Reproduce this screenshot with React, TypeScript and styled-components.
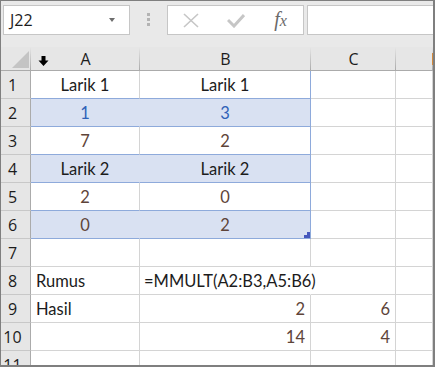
import styled, { createGlobalStyle } from 'styled-components'

// ── palette ────────────────────────────────────────────────
const C = {
  frame: '#7f7f7f',
  chrome: '#e9e9e9',
  head: '#e6e6e6',
  headLine: '#ababab',
  rowLine: '#c8c8c8',
  box: '#c6c6c6',
  grid: '#d4d4d4',
  band: '#d9e1f2',
  tableLine: '#8eaadb',
  handle: '#4658bd',
  text: '#1c1c1c',
  blue: '#2f62b8',
  num: '#5e4439',
  icon: '#c6c6c6',
  orange: '#d2893c',
}

const Global = createGlobalStyle`
  html, body { margin: 0; padding: 0; background: #fff; }
  * { box-sizing: border-box; }
`

const Frame = styled.div`
  width: 435px;
  height: 367px;
  border: 1px solid ${C.frame};
  border-right-width: 2px;
  border-bottom-width: 2px;
  background: #fff;
  overflow: hidden;
  display: flex;
  flex-direction: column;
`

// ── formula bar ───────────────────────────────────────────
const Toolbar = styled.div`
  height: 46px;
  flex-shrink: 0;
  background: ${C.chrome};
  display: flex;
  align-items: flex-start;
  padding: 4px 0 0 2px;
`

const NameBox = styled.div`
  width: 127px;
  height: 30px;
  background: #fff;
  border: 1px solid ${C.box};
  display: flex;
  align-items: center;
  justify-content: space-between;
  padding: 0 14px 0 6px;
  font-family: 'Open Sans', 'Noto Sans', sans-serif;
  font-size: 16px;
  color: ${C.text};
`

const Caret = styled.span`
  width: 0;
  height: 0;
  border-left: 3.5px solid transparent;
  border-right: 3.5px solid transparent;
  border-top: 4px solid #6d6d6d;
`

const Grip = styled.div`
  width: 37px;
  height: 30px;
  display: flex;
  flex-direction: column;
  align-items: center;
  padding-top: 8px;
  gap: 2px;
`

const GripDot = styled.span`
  width: 3px;
  height: 3px;
  background: #b3b3b3;
`

const FxButtons = styled.div`
  width: 137px;
  height: 30px;
  background: #fff;
  border: 1px solid ${C.box};
  display: grid;
  grid-template-columns: repeat(3, 1fr);
  margin-right: 3px;
`

const IconSlot = styled.div`
  display: flex;
  align-items: center;
  justify-content: center;
`

const FxLabel = styled.span`
  font-family: 'Liberation Serif', 'DejaVu Serif', serif;
  font-style: italic;
  font-size: 20px;
  color: #6a6a6a;
  line-height: 1;
  margin-top: -2px;
  & > span {
    font-size: 16px;
  }
`

const FormulaInput = styled.div`
  flex: 1;
  height: 30px;
  background: #fff;
  border: 1px solid ${C.box};
  border-right: none;
`

// ── sheet grid ────────────────────────────────────────────
const Sheet = styled.div`
  flex: 1;
  display: grid;
  grid-template-columns: 30px 109px 171px 85px 1fr;
  grid-template-rows: 24px;
  grid-auto-rows: 28px;
  background: #fff;
`

const HeadCell = styled.div<{ $mark?: boolean }>`
  position: relative;
  background: ${C.head};
  border-bottom: 1px solid ${C.headLine};
  display: flex;
  align-items: center;
  justify-content: center;
  font-family: 'Open Sans', 'Noto Sans', sans-serif;
  font-size: 16px;
  color: ${C.text};
  padding-top: 1px;
  &::after {
    content: '';
    position: absolute;
    right: 0;
    top: 0;
    bottom: 0;
    width: 1px;
    background: linear-gradient(${C.head}, ${C.headLine});
  }
  &::before {
    content: '';
    display: ${(p) => (p.$mark ? 'block' : 'none')};
    position: absolute;
    right: 0;
    top: 6px;
    width: 1px;
    height: 12px;
    background: ${C.orange};
    z-index: 1;
  }
`

const CornerMark = styled.span`
  position: absolute;
  right: 2px;
  bottom: 2px;
  width: 0;
  height: 0;
  border-left: 17px solid transparent;
  border-bottom: 17px solid #c4c4c4;
`

const SortArrow = styled.svg`
  position: absolute;
  left: 7px;
  top: 9px;
`

const RowHead = styled.div`
  background: ${C.head};
  border-right: 1px solid ${C.headLine};
  border-bottom: 1px solid ${C.rowLine};
  display: flex;
  align-items: flex-end;
  justify-content: center;
  padding: 0 6px 3px 0;
  font-family: 'Open Sans', 'Noto Sans', sans-serif;
  font-size: 16px;
  line-height: 20px;
  color: ${C.text};
`

type Align = 'left' | 'center' | 'right'
type Tone = 'text' | 'blue' | 'num'

interface CellProps {
  $align?: Align
  $tone?: Tone
  $band?: boolean
  $table?: boolean
  $edge?: boolean
  $flow?: boolean
}

const toneColor = (t?: Tone) => (t === 'blue' ? C.blue : t === 'num' ? C.num : C.text)

const rightLine = (p: CellProps) => {
  if (p.$edge) return C.tableLine
  if (p.$flow) return '#fff'
  if (p.$band) return C.band
  return C.grid
}

const Cell = styled.div<CellProps>`
  position: relative;
  background: ${(p) => (p.$band ? C.band : 'transparent')};
  border-right: 1px solid ${rightLine};
  border-bottom: 1px solid ${(p) => (p.$table ? C.tableLine : C.grid)};
  display: flex;
  align-items: flex-end;
  justify-content: ${(p) =>
    p.$align === 'center' ? 'center' : p.$align === 'right' ? 'flex-end' : 'flex-start'};
  padding: 0 5px 3px ${(p) => (p.$flow ? 4 : 5)}px;
  font-family: Lato, 'Open Sans', sans-serif;
  font-size: 16.5px;
  line-height: 20px;
  white-space: nowrap;
  overflow: visible;
  color: ${(p) => toneColor(p.$tone)};
`

const FillHandle = styled.span`
  position: absolute;
  right: 0;
  bottom: 0;
  width: 6px;
  height: 6px;
  background: ${C.handle};
  clip-path: polygon(50% 0, 100% 0, 100% 100%, 0 100%, 0 50%, 50% 50%);
`

// ── data ──────────────────────────────────────────────────
interface RowData {
  a?: string
  b?: string
  c?: string
  table?: boolean
  band?: boolean
  tone?: Tone
  bTone?: Tone
  align?: Align
  bAlign?: Align
  handle?: boolean
  flow?: boolean
}

const rows: RowData[] = [
  { a: 'Larik 1', b: 'Larik 1', table: true, align: 'center' },
  { a: '1', b: '3', table: true, band: true, tone: 'blue', align: 'center' },
  { a: '7', b: '2', table: true, tone: 'num', align: 'center' },
  { a: 'Larik 2', b: 'Larik 2', table: true, band: true, align: 'center' },
  { a: '2', b: '0', table: true, tone: 'num', align: 'center' },
  { a: '0', b: '2', table: true, band: true, tone: 'num', align: 'center', handle: true },
  {},
  { a: 'Rumus', b: '=MMULT(A2:B3,A5:B6)', flow: true },
  { a: 'Hasil', b: '2', c: '6', bTone: 'num', bAlign: 'right' },
  { b: '14', c: '4', bTone: 'num', bAlign: 'right' },
  {},
]

export default function App() {
  return (
    <>
      <Global />
      <Frame>
        <Toolbar>
          <NameBox>
            <span>J22</span>
            <Caret />
          </NameBox>
          <Grip>
            <GripDot />
            <GripDot />
            <GripDot />
          </Grip>
          <FxButtons>
            <IconSlot>
              <svg width="16" height="15" viewBox="0 0 16 15">
                <path d="M1 1 L15 14 M15 1 L1 14" stroke={C.icon} strokeWidth="1.6" fill="none" />
              </svg>
            </IconSlot>
            <IconSlot>
              <svg width="18" height="15" viewBox="0 0 18 15">
                <path d="M1 7 L7 13 L17 2" stroke={C.icon} strokeWidth="3" fill="none" />
              </svg>
            </IconSlot>
            <IconSlot>
              <FxLabel>
                f<span>x</span>
              </FxLabel>
            </IconSlot>
          </FxButtons>
          <FormulaInput />
        </Toolbar>

        <Sheet>
          <HeadCell>
            <CornerMark />
          </HeadCell>
          <HeadCell>
            <SortArrow width="11" height="10" viewBox="0 0 11 10">
              <path d="M3.5 0 H7.5 V4.5 H10.5 L5.5 10 L0.5 4.5 H3.5 Z" fill="#000" />
            </SortArrow>
            A
          </HeadCell>
          <HeadCell>B</HeadCell>
          <HeadCell>C</HeadCell>
          <HeadCell $mark />

          {rows.map((r, i) => [
            <RowHead key={`h${i}`}>{i + 1}</RowHead>,
            <Cell
              key={`a${i}`}
              $align={r.align ?? 'left'}
              $tone={r.tone}
              $band={r.band}
              $table={r.table}
            >
              {r.a}
            </Cell>,
            <Cell
              key={`b${i}`}
              $align={r.bAlign ?? r.align ?? 'left'}
              $tone={r.bTone ?? r.tone}
              $band={r.band}
              $table={r.table}
              $edge={r.table}
              $flow={r.flow}
            >
              {r.b}
              {r.handle && <FillHandle />}
            </Cell>,
            <Cell key={`c${i}`} $align="right" $tone="num">
              {r.c}
            </Cell>,
            <Cell key={`d${i}`} />,
          ])}
        </Sheet>
      </Frame>
    </>
  )
}
